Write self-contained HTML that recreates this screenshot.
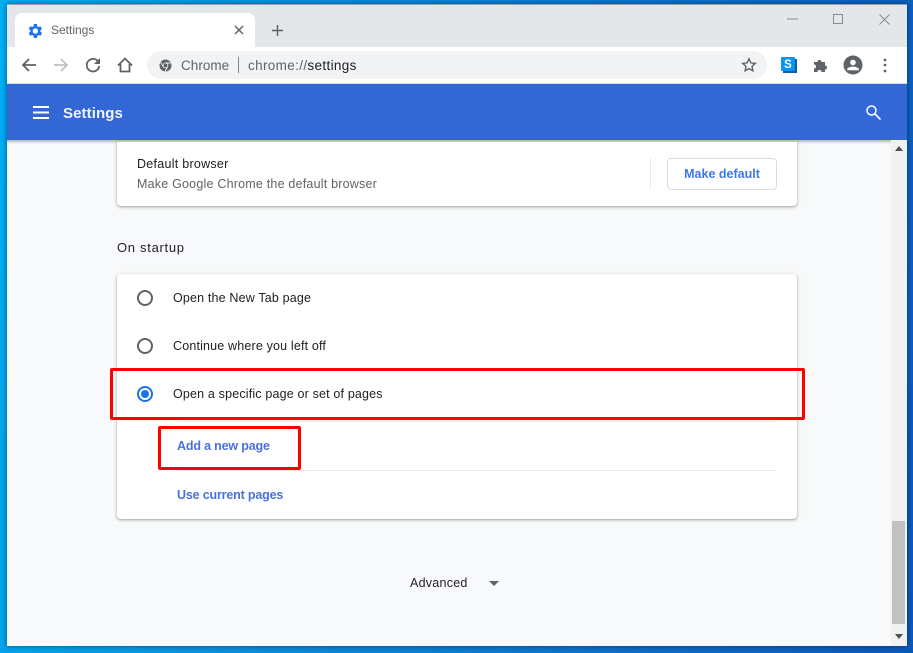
<!DOCTYPE html>
<html><head><meta charset="utf-8"><style>
html,body{margin:0;padding:0;width:913px;height:653px;overflow:hidden}
body{position:relative;background:linear-gradient(100deg,#00aef5 0%,#0a8ee0 35%,#0b58bc 100%);font-family:"Liberation Sans",sans-serif}
div{position:absolute;box-sizing:border-box}
.t{white-space:nowrap;line-height:16px}
svg{position:absolute;overflow:visible}
.card{background:#fff;border-radius:4px;box-shadow:0 1px 2px rgba(60,64,67,.35),0 1px 3px 1px rgba(60,64,67,.12)}
.radio{width:16px;height:16px;border:2px solid #5f6368;border-radius:50%;left:137px}
.o{font-size:12.500px;letter-spacing:.17px;color:#202124;left:173px}
.l{font-size:12.500px;font-weight:bold;color:#4a70da;left:177px;letter-spacing:-.17px}
.red{border:3px solid #f00;border-radius:2px}
</style></head><body>
<div style="left:7px;top:4px;width:900px;height:642px;background:#f8f9fa;box-shadow:0 0 5px rgba(0,0,0,.5);overflow:hidden"></div>
<div style="left:7px;top:4px;width:900px;height:43px;background:#e4e7ea;border-top:1px solid #9aa0a6"></div>
<div style="left:15px;top:13px;width:240px;height:34px;background:#fff;border-radius:7px 7px 0 0"></div>
<svg style="left:28px;top:23.500px" width="14" height="14" viewBox="2.500 3 18 18"><path fill="#1a73e8" d="M19.400 13a7.500 7.500 0 0 0 0-2l2.100-1.600-2-3.500-2.500 1a7.500 7.500 0 0 0-1.700-1L15 3h-4l-.4 2.900a7.500 7.500 0 0 0-1.700 1l-2.500-1-2 3.500L6.600 11a7.500 7.500 0 0 0 0 2l-2.200 1.600 2 3.500 2.500-1c.5.4 1.100.7 1.700 1L11 21h4l.4-2.900c.6-.3 1.200-.6 1.700-1l2.500 1 2-3.500zM13 15.500a3.500 3.500 0 1 1 0-7 3.500 3.500 0 0 1 0 7z" transform="translate(-1 0)"/></svg>
<div class="t" style="left:51px;top:22px;font-size:12px;color:#5f6368">Settings</div>
<svg style="left:235px;top:26px" width="8" height="8"><path d="M0 0l8 8M8 0L0 8" stroke="#5f6368" stroke-width="1.500"/></svg>
<svg style="left:272px;top:25px" width="11" height="11"><path d="M5.500 0v11M0 5.500h11" stroke="#5f6368" stroke-width="1.500"/></svg>
<svg style="left:787px;top:18px" width="11" height="2"><path d="M0 1h11" stroke="#8a8d90"/></svg>
<svg style="left:833px;top:14px" width="10" height="10"><rect x=".5" y=".5" width="9" height="9" fill="none" stroke="#8a8d90"/></svg>
<svg style="left:879px;top:14px" width="11" height="11"><path d="M.5.500l10 10M10.500.500l-10 10" stroke="#8a8d90"/></svg>
<div style="left:7px;top:47px;width:900px;height:37px;background:#fff;border-bottom:1px solid #d8dadc"></div>
<svg style="left:21px;top:57px" width="16" height="16"><path d="M15 8H2M8 2L2 8l6 6" fill="none" stroke="#5f6368" stroke-width="1.800"/></svg>
<svg style="left:53px;top:57px" width="16" height="16"><path d="M1 8h13M8 2l6 6-6 6" fill="none" stroke="#bdc1c6" stroke-width="1.800"/></svg>
<svg style="left:85px;top:57px" width="16" height="16"><path d="M13.500 5A6.300 6.300 0 1 0 14.300 9" fill="none" stroke="#5f6368" stroke-width="1.800"/><path d="M15 1v6H9z" fill="#5f6368"/></svg>
<svg style="left:117px;top:57px" width="16" height="16"><path d="M1 8.500L8 1.500l7 7M3.500 7v7.500h9V7" fill="none" stroke="#5f6368" stroke-width="1.800"/></svg>
<div style="left:147px;top:51px;width:620px;height:28px;background:#f1f3f4;border-radius:14px"></div>
<svg style="left:159px;top:59px" width="13" height="13" viewBox="0 0 13 13"><circle cx="6.500" cy="6.500" r="6" fill="#5f6368"/><path d="M6.500 4H12M4.300 7.800L1.600 3M8.700 7.800L6 12.400" stroke="#f1f3f4" stroke-width=".9"/><circle cx="6.500" cy="6.500" r="2.800" fill="#f1f3f4"/><circle cx="6.500" cy="6.500" r="2" fill="#5f6368"/></svg>
<div class="t" style="left:181px;top:58px;font-size:13.500px;letter-spacing:.03px;color:#5f6368">Chrome</div>
<div style="left:238px;top:57px;width:1px;height:16px;background:#80868b"></div>
<div class="t" style="left:248px;top:58px;font-size:13.500px;letter-spacing:.35px;color:#5f6368">chrome://<span style="color:#202124">settings</span></div>
<svg style="left:741px;top:57px" width="16" height="16" viewBox="0 0 16 16"><path d="M8 1.800l1.900 4.100 4.400.5-3.300 3 .9 4.400L8 11.600l-3.900 2.200.9-4.400-3.300-3 4.400-.5z" fill="none" stroke="#5f6368" stroke-width="1.400"/></svg>
<div style="left:783px;top:59px;width:14px;height:14px;background:#0a5ea8"></div>
<div class="t" style="left:781px;top:57px;width:14px;height:14px;padding-top:1px;background:#0a96f0;border-radius:1px;color:#fff;font-size:11.500px;font-weight:bold;line-height:14px;text-align:center">S</div>
<svg style="left:813px;top:57px" width="16" height="16" viewBox="0 0 16 16"><path fill="#5f6368" d="M1 5h3.500a2 2 0 0 1 4 0H12v3.500a2 2 0 0 1 0 4V15H8.500a2 2 0 0 0-4 0H1v-3.500a2 2 0 0 0 0-4z"/></svg>
<svg style="left:843px;top:55px" width="20" height="20" viewBox="0 0 20 20"><circle cx="10" cy="10" r="9.500" fill="#5f6368"/><circle cx="10" cy="7.500" r="2.800" fill="#fff"/><path d="M4.200 13.800c1.300-1.600 3.700-2.200 5.800-2.200s4.500.6 5.800 2.200v1.400H4.200z" fill="#fff"/></svg>
<svg style="left:883px;top:58px" width="4" height="15"><circle cx="2" cy="2" r="1.400" fill="#5f6368"/><circle cx="2" cy="7" r="1.400" fill="#5f6368"/><circle cx="2" cy="13" r="1.400" fill="#5f6368"/></svg>
<div style="left:7px;top:84px;width:900px;height:56px;background:#3367d6"></div>
<div style="left:7px;top:140px;width:884px;height:4px;background:linear-gradient(#b5b6b8,rgba(248,249,250,0))"></div>
<svg style="left:33px;top:106px" width="16" height="13"><path d="M0 1h16M0 6.500h16M0 12h16" stroke="#fff" stroke-width="1.900"/></svg>
<div class="t" style="left:63px;top:106px;font-size:15px;letter-spacing:.1px;font-weight:bold;color:#f1f4fc">Settings</div>
<svg style="left:866px;top:105px" width="15" height="15"><circle cx="5.500" cy="5.500" r="4.500" fill="none" stroke="#fff" stroke-width="1.500"/><path d="M9 9l5.500 5.500" stroke="#fff" stroke-width="1.600"/></svg>
<div style="left:891px;top:140px;width:16px;height:506px;background:#f1f1f1"></div>
<div style="left:892px;top:521px;width:13px;height:103px;background:#c1c1c1"></div>
<svg style="left:895px;top:146px" width="8" height="5"><path d="M4 0l4 5H0z" fill="#505050"/></svg>
<svg style="left:895px;top:634px" width="8" height="5"><path d="M0 0h8L4 5z" fill="#505050"/></svg>

<div class="card" style="left:117px;top:142px;width:680px;height:64px;border-radius:0 0 4px 4px"></div>
<div class="t" style="left:137px;top:156px;font-size:12.500px;letter-spacing:.27px;color:#202124">Default browser</div>
<div class="t" style="left:137px;top:176px;font-size:12.500px;letter-spacing:.21px;color:#5f6368">Make Google Chrome the default browser</div>
<div style="left:650px;top:158px;width:1px;height:32px;background:#e8eaed"></div>
<div class="t" style="left:667px;top:158px;width:110px;height:32px;border:1px solid #dadce0;border-radius:4px;background:#fff;color:#3f78e8;font-size:12.500px;font-weight:bold;line-height:30px;text-align:center">Make default</div>
<div class="t" style="left:117px;top:240px;font-size:13px;letter-spacing:.7px;color:#202124">On startup</div>
<div class="card" style="left:117px;top:274px;width:680px;height:245px"></div>
<div class="radio" style="top:290px"></div>
<div class="t o" style="top:290px">Open the New Tab page</div>
<div class="radio" style="top:338px"></div>
<div class="t o" style="top:338px">Continue where you left off</div>
<div class="radio" style="top:386px;border-color:#1a73e8"></div>
<div style="left:141px;top:390px;width:8px;height:8px;border-radius:50%;background:#1a73e8"></div>
<div class="t o" style="top:386px">Open a specific page or set of pages</div>
<div style="left:177px;top:421px;width:600px;height:1px;background:#e8eaed"></div>
<div class="t l" style="top:438px">Add a new page</div>
<div style="left:177px;top:470px;width:600px;height:1px;background:#e8eaed"></div>
<div class="t l" style="top:487px">Use current pages</div>
<div class="red" style="left:110px;top:368px;width:695px;height:52px"></div>
<div class="red" style="left:158px;top:426px;width:143px;height:44px"></div>
<div class="t" style="left:410px;top:575px;font-size:12.500px;letter-spacing:.25px;color:#202124">Advanced</div>
<svg style="left:489px;top:581px" width="10" height="5"><path d="M0 0h10L5 5z" fill="#5f6368"/></svg>
</body></html>
